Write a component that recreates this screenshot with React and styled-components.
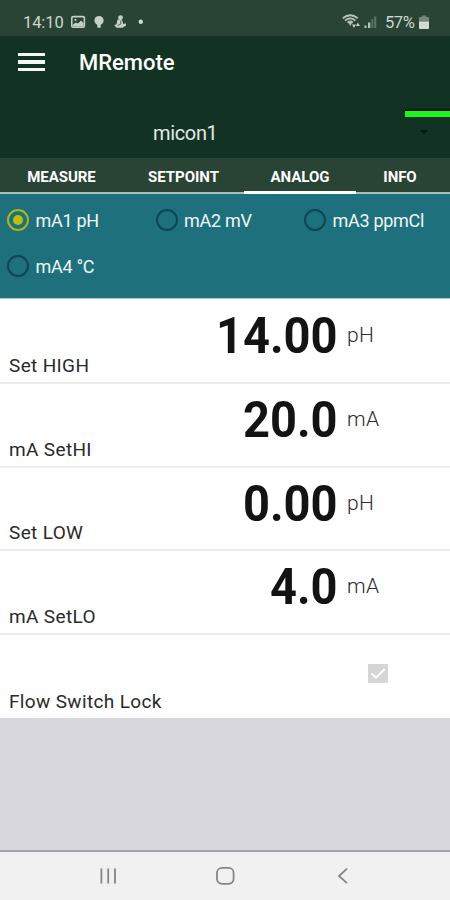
import { useState } from 'react';
import styled, { createGlobalStyle } from 'styled-components';

const tabs = [
  { name: 'MEASURE', width: 123 },
  { name: 'SETPOINT', width: 121 },
  { name: 'ANALOG', width: 112 },
  { name: 'INFO', width: 94, shift: -6 },
];

const channels = ['mA1 pH', 'mA2 mV', 'mA3 ppmCl', 'mA4 °C'];

const settings = [
  { label: 'Set HIGH', value: '14.00', unit: 'pH' },
  { label: 'mA SetHI', value: '20.0', unit: 'mA' },
  { label: 'Set LOW', value: '0.00', unit: 'pH' },
  { label: 'mA SetLO', value: '4.0', unit: 'mA' },
];

function App() {
  const [tab, setTab] = useState('ANALOG');
  const [channel, setChannel] = useState('mA1 pH');

  return (
    <Screen>
      <GlobalStyle />
      <StatusBar>
        <Clock>14:10</Clock>
        <NoticeIcons />
        <StatusSpacer />
        <SignalIcons />
        <Battery>57%</Battery>
        <BatteryIcon />
      </StatusBar>

      <AppBar>
        <MenuButton aria-label='menu'>
          <span />
          <span />
          <span />
        </MenuButton>
        <Title>MRemote</Title>
      </AppBar>

      <DeviceBar>
        <DeviceName>micon1</DeviceName>
        <SignalLine />
        <DropArrow />
      </DeviceBar>

      <Tabs>
        {tabs.map((t) => (
          <Tab
            key={t.name}
            $width={t.width}
            $shift={t.shift}
            $active={t.name === tab}
            onClick={() => setTab(t.name)}
          >
            {t.name}
          </Tab>
        ))}
      </Tabs>

      <Channels>
        {channels.map((c) => (
          <Channel key={c} onClick={() => setChannel(c)}>
            <Radio $checked={c === channel} />
            <span>{c}</span>
          </Channel>
        ))}
      </Channels>

      <List>
        {settings.map((s) => (
          <Row key={s.label}>
            <Reading>
              <Value>{s.value}</Value>
              <Unit>{s.unit}</Unit>
            </Reading>
            <Label>{s.label}</Label>
          </Row>
        ))}
        <Row>
          <CheckLine>
            <CheckBox>
              <svg width='20' height='19' viewBox='0 0 20 19'>
                <path
                  d='M3.5 9.5 L8 13.7 L16.7 5'
                  fill='none'
                  stroke='#fff'
                  strokeWidth='2'
                />
              </svg>
            </CheckBox>
          </CheckLine>
          <Label>Flow Switch Lock</Label>
        </Row>
      </List>

      <NavBar>
        <svg width='18' height='18' viewBox='0 0 18 18'>
          <path d='M3.4 1.5V16.5M10.2 1.5V16.5M17 1.5V16.5' />
        </svg>
        <svg width='20' height='20' viewBox='0 0 20 20'>
          <rect x='2' y='1.8' width='16.6' height='16' rx='5' />
        </svg>
        <svg width='18' height='18' viewBox='0 0 18 18'>
          <path d='M13 1.7L5 9L13 16.2' />
        </svg>
      </NavBar>
    </Screen>
  );
}

function NoticeIcons() {
  return (
    <NoticeSvg width='76' height='16' viewBox='0 0 76 16'>
      {/* picture */}
      <rect x='0.8' y='2.6' width='12.6' height='10.6' rx='1.5' fill='none' stroke='#c5d0c8' strokeWidth='1.6' />
      <path d='M2 12V10.5L5 8.5L7 9.5L10 6.5L12.5 9V12.5H2Z' fill='#c5d0c8' />
      <circle cx='4.5' cy='5.8' r='1.1' fill='#c5d0c8' />
      {/* pin */}
      <circle cx='28' cy='6.6' r='4.6' fill='#c5d0c8' />
      <path d='M26.3 10H29.7V13.7H26.3Z' fill='#c5d0c8' />
      {/* figure */}
      <circle cx='49.5' cy='3.6' r='2.4' fill='#c5d0c8' />
      <path d='M46.5 5.5H51V7.5H52V10L55 9.3V11.5L51.5 13.8H45.5L43.3 11.3L45.5 10.3Z' fill='#c5d0c8' />
      <path d='M49.8 6.5V10L46.5 11.5' fill='none' stroke='#466050' strokeWidth='0.9' />
      <circle cx='69.8' cy='7.8' r='2.2' fill='#d0d9d2' />
    </NoticeSvg>
  );
}

function SignalIcons() {
  return (
    <SignalSvg width='36' height='15' viewBox='0 0 36 15'>
      <g fill='none' stroke='#b5c4b9' strokeWidth='1.8'>
        <path d='M0.8 4.2Q8.2 -1.8 15.7 4.2' />
        <path d='M3 6.6Q8.2 2.2 13.4 6.6' />
        <path d='M5.5 8.6Q8.2 6.3 10.9 8.6' />
      </g>
      <path d='M6 8H10.5L8.3 12Z' fill='#b5c4b9' />
      <path d='M10 10.5H14L12 14ZM13.9 12L15.9 8.5L17.9 12Z' fill='#c5d0c8' />
      <path d='M22.5 14V11.5H24.5V14ZM26 14V8.5H28.3V14Z' fill='#b5c4b9' />
      <path d='M29.3 14V5H31.3V14ZM32 14V2.5H34.3V14Z' fill='#58705f' />
    </SignalSvg>
  );
}

function BatteryIcon() {
  return (
    <BatterySvg width='10' height='15' viewBox='0 0 10 15'>
      <path d='M0 3Q0 2 1 2H3V0.5H7V2H9Q10 2 10 3V6.5H0Z' fill='#72877a' />
      <path d='M0 6.5H10V13Q10 14 9 14H1Q0 14 0 13Z' fill='#d2dcd4' />
    </BatterySvg>
  );
}

export default App;

const GlobalStyle = createGlobalStyle`
  * {
    box-sizing: border-box;
  }

  body {
    margin: 0;
    background: #d7d7dd;
  }

  button {
    padding: 0;
    border: none;
    background: none;
    font: inherit;
    color: inherit;
    cursor: pointer;
  }
`;

const Screen = styled.div`
  display: flex;
  flex-direction: column;
  width: 450px;
  height: 900px;
  overflow: hidden;
  background: #d7d7dd;
  font-family: Roboto, 'Liberation Sans', sans-serif;
`;

const StatusBar = styled.div`
  display: flex;
  align-items: center;
  flex: none;
  height: 36px;
  padding: 9px 25px 0 23px;
  background: #294434;
  color: #cbd7ce;
`;

const Clock = styled.span`
  width: 48px;
  font-size: 16.5px;
  line-height: 20px;
  letter-spacing: -0.1px;
`;

const NoticeSvg = styled.svg`
  margin-top: -2px;
`;

const StatusSpacer = styled.div`
  flex: 1;
`;

const SignalSvg = styled.svg`
  margin: -2px 7px 0 0;
`;

const Battery = styled.span`
  width: 34px;
  font-size: 16.5px;
  line-height: 20px;
  letter-spacing: -0.4px;
`;

const BatterySvg = styled.svg`
  margin: -1px -4px 0 0;
`;

const AppBar = styled.header`
  display: flex;
  align-items: center;
  flex: none;
  height: 52px;
  padding-left: 18px;
  background: #123323;
  color: #fff;
`;

const MenuButton = styled.button`
  display: flex;
  flex-direction: column;
  gap: 4px;
  width: 27px;

  span {
    height: 3.5px;
    background: #f4f7f5;
  }
`;

const Title = styled.h1`
  margin: 2px 0 0 34px;
  font-size: 22px;
  font-weight: 500;
  line-height: 28px;
`;

const DeviceBar = styled.div`
  position: relative;
  flex: none;
  height: 70px;
  padding: 33px 0 0 153px;
  background: #123323;
`;

const DeviceName = styled.div`
  color: #e3e9e5;
  font-size: 20px;
  line-height: 24px;
  letter-spacing: -0.35px;
`;

const SignalLine = styled.div`
  position: absolute;
  top: 21px;
  right: 0;
  width: 45px;
  height: 8px;
  border-top: 2px solid #03150b;
  background: #1df51f;
`;

const DropArrow = styled.div`
  position: absolute;
  top: 42px;
  right: 22px;
  border: 4.5px solid transparent;
  border-top-color: #03150b;
  border-bottom: none;
`;

const Tabs = styled.nav`
  display: flex;
  flex: none;
  height: 36px;
  background: #294434;
  border-bottom: 2px solid #a9c0ba;
`;

const Tab = styled.button`
  position: relative;
  width: ${({ $width }) => $width}px;
  height: 36px;
  padding: 5px ${({ $shift }) => ($shift ? -$shift : 0)}px 0 0;
  border-bottom: 3px solid ${({ $active }) => ($active ? '#fff' : 'transparent')};
  color: #fff;
  font-size: 15px;
  font-weight: 700;
  line-height: 28px;
  letter-spacing: -0.05px;
`;

const Channels = styled.div`
  display: grid;
  grid-template-columns: repeat(3, 148.5px);
  grid-auto-rows: 46px;
  flex: none;
  height: 105px;
  padding: 3px 0 0 7px;
  border-bottom: 1px solid #a9cdd3;
  background: #1e707c;
`;

const Channel = styled.button`
  display: flex;
  align-items: center;
  gap: 6.5px;
  color: #eef7f8;
  font-size: 18px;
  letter-spacing: -0.3px;
  white-space: nowrap;
`;

const Radio = styled.span`
  display: flex;
  flex: none;
  width: 22px;
  height: 22px;
  border: 2px solid ${({ $checked }) => ($checked ? '#a9b61d' : '#0d4654')};
  border-radius: 50%;

  &::after {
    content: '';
    width: 10px;
    height: 10px;
    margin: auto;
    border-radius: 50%;
    background: ${({ $checked }) => ($checked ? '#bdbd06' : 'transparent')};
  }
`;

const List = styled.main`
  flex: 1;
  border-top: 1px solid #fff;
`;

const Row = styled.div`
  display: flex;
  flex-direction: column;
  justify-content: space-between;
  height: 83.75px;
  padding: 7px 0 4px 9px;
  border-bottom: 2px solid #ececed;
  background: #fff;

  &:last-child {
    height: 82.5px;
    border-bottom: none;
  }
`;

const Reading = styled.div`
  display: flex;
  height: 46px;
`;

const Value = styled.div`
  width: 328.5px;
  color: #131313;
  font-size: 50px;
  font-weight: 700;
  line-height: 59px;
  text-align: right;
  transform: scaleX(0.94);
  transform-origin: right;
`;

const Unit = styled.div`
  margin-left: 9.5px;
  color: #2c2c2c;
  font-size: 21px;
  font-weight: 300;
  line-height: 56px;
  letter-spacing: 0.3px;
`;

const Label = styled.div`
  color: #2a2a2a;
  font-size: 19px;
  line-height: 24px;
  letter-spacing: 0.35px;
`;

const CheckLine = styled.div`
  padding: 22px 0 0 359px;
`;

const CheckBox = styled.div`
  width: 20px;
  height: 19px;
  background: #d6d6d6;
`;

const NavBar = styled.footer`
  display: flex;
  align-items: center;
  justify-content: center;
  gap: 99px;
  flex: none;
  height: 50px;
  padding-bottom: 1px;
  border-top: 2px solid #a3a3a7;
  background: #f1f1f1;

  svg {
    fill: none;
    stroke: #858585;
    stroke-width: 1.8;
  }
`;
